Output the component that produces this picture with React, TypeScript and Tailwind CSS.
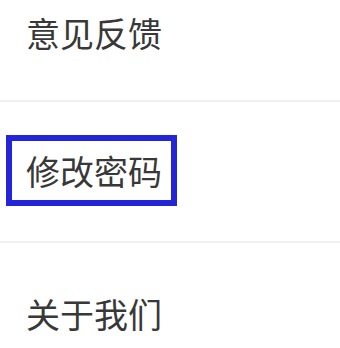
export default function App() {
  const font = { fontFamily: '"Noto Sans CJK SC", "Noto Sans", sans-serif' };

  return (
    <div
      className="w-[340px] h-[348px] overflow-hidden bg-white text-[#383838]"
      style={font}
    >
      <div className="h-[100px] pl-[26px] pt-[16px]">
        <span className="text-[34px] leading-[34px]">意见反馈</span>
      </div>
      <div className="h-[2px] bg-[#f0f0f0]" />
      <div className="h-[139px] pl-[6px] pt-[33px]">
        <div className="flex h-[71px] w-[171px] items-center border-[6px] border-[#2424d8] pl-[14px]">
          <span className="text-[34px] leading-[34px]">修改密码</span>
        </div>
      </div>
      <div className="h-[2px] bg-[#f0f0f0]" />
      <div className="pl-[26px] pt-[54px]">
        <span className="text-[34px] leading-[34px]">关于我们</span>
      </div>
    </div>
  );
}
